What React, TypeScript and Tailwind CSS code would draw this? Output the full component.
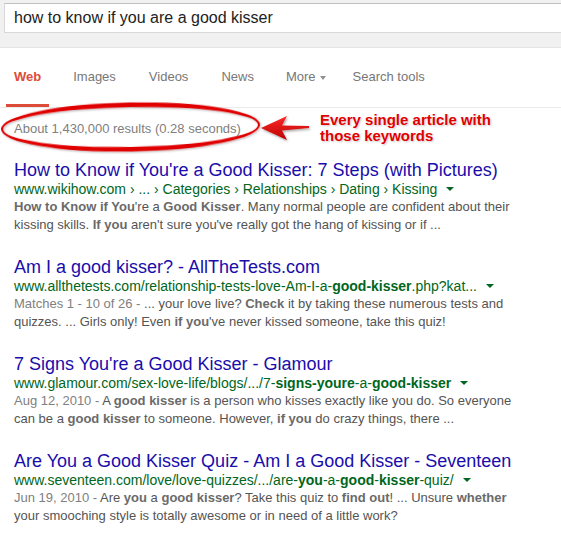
import React from "react";

type P = { children: React.ReactNode };
const B = ({ children }: P) => <b className="font-bold text-[#6a6a6a]">{children}</b>;
const G = ({ children }: P) => <b className="font-bold">{children}</b>;
const D = ({ children }: P) => <span className="text-[#808080]">{children}</span>;

function GreenCaret() {
  return (
    <span className="inline-block align-middle ml-[9px] mb-[2px] w-0 h-0 border-l-[4px] border-r-[4px] border-t-[4px] border-l-transparent border-r-transparent border-t-[#006621]" />
  );
}

function Result({
  title,
  url,
  lines,
  first,
}: {
  title: string;
  url: React.ReactNode;
  lines: React.ReactNode[];
  first?: boolean;
}) {
  return (
    <div className={first ? "mt-[22px]" : "mt-[23px]"}>
      <div className="text-[18px] leading-[20px] text-[#1a0dab] whitespace-nowrap">{title}</div>
      <div className="text-[14px] leading-[18px] text-[#006621] whitespace-nowrap">
        {url}
        <GreenCaret />
      </div>
      <div className="text-[13px] leading-[18px] text-[#545454]">
        {lines.map((l, i) => (
          <div key={i} className="whitespace-nowrap">
            {l}
          </div>
        ))}
      </div>
    </div>
  );
}

export default function App() {
  return (
    <div className="relative w-[561px] h-[540px] overflow-hidden bg-white font-['Liberation_Sans',Arial,sans-serif]">
      {/* Search band */}
      <div className="h-[48px] bg-[#f1f1f1] border-b border-[#e5e5e5] overflow-hidden pt-[3px] pl-[4px]">
        <div className="w-[620px] h-[30px] bg-white border border-[#d9d9d9] border-t-[#c0c0c0] pl-[9px] flex items-center">
          <span className="text-[16px] text-[#222] whitespace-nowrap">how to know if you are a good kisser</span>
        </div>
      </div>

      {/* Tabs */}
      <div className="border-b border-[#ebebeb] pl-[6px] flex items-end text-[13px] leading-[16px] text-[#777]">
        <div className="px-[8px] pt-[21px] pb-[19px] border-b-[3px] border-[#dd4b39] text-[#dd4b39] font-bold">Web</div>
        <div className="ml-[24px] pt-[21px] pb-[22px]">Images</div>
        <div className="ml-[33px] pt-[21px] pb-[22px]">Videos</div>
        <div className="ml-[33px] pt-[21px] pb-[22px]">News</div>
        <div className="ml-[32px] pt-[21px] pb-[22px] flex items-center">
          More
          <span className="ml-[4px] mt-[1px] w-0 h-0 border-l-[3.5px] border-r-[3.5px] border-t-[4px] border-l-transparent border-r-transparent border-t-[#909090]" />
        </div>
        <div className="ml-[27px] pt-[21px] pb-[22px]">Search tools</div>
      </div>

      {/* Results */}
      <div className="pl-[14px]">
        <div className="mt-[12px] text-[13px] leading-[18px] text-[#808080] whitespace-nowrap">
          About 1,430,000 results (0.28 seconds)
        </div>

        <Result
          first
          title="How to Know if You're a Good Kisser: 7 Steps (with Pictures)"
          url={<>www.wikihow.com › ... › Categories › Relationships › Dating › Kissing</>}
          lines={[
            <>
              <B>How to Know if You</B>'re a <B>Good Kisser</B>. Many normal people are confident about their
            </>,
            <>
              kissing skills. <B>If you</B> aren't sure you've really got the hang of kissing or if ...
            </>,
          ]}
        />

        <Result
          title="Am I a good kisser? - AllTheTests.com"
          url={
            <>
              www.allthetests.com/relationship-tests-love-Am-I-a-<G>good-kisser</G>.php?kat...
            </>
          }
          lines={[
            <>
              <D>Matches 1 - 10 of 26 - </D>... your love live? <B>Check</B> it by taking these numerous tests and
            </>,
            <>
              quizzes. ... Girls only! Even <B>if you</B>'ve never kissed someone, take this quiz!
            </>,
          ]}
        />

        <Result
          title="7 Signs You're a Good Kisser - Glamour"
          url={
            <>
              www.glamour.com/sex-love-life/blogs/.../7-<G>signs-youre</G>-a-<G>good-kisser</G>
            </>
          }
          lines={[
            <>
              <D>Aug 12, 2010 - </D>A <B>good kisser</B> is a person who kisses exactly like you do. So everyone
            </>,
            <>
              can be a <B>good kisser</B> to someone. However, <B>if you</B> do crazy things, there ...
            </>,
          ]}
        />

        <Result
          title="Are You a Good Kisser Quiz - Am I a Good Kisser - Seventeen"
          url={
            <>
              www.seventeen.com/love/love-quizzes/.../are-<G>you</G>-a-<G>good</G>-<G>kisser</G>-quiz/
            </>
          }
          lines={[
            <>
              <D>Jun 19, 2010 - </D>Are <B>you</B> a <B>good kisser</B>? Take this quiz to <B>find out</B>! ... Unsure{" "}
              <B>whether</B>
            </>,
            <>your smooching style is totally awesome or in need of a little work?</>,
          ]}
        />
      </div>

      {/* Annotation: ellipse */}
      <svg
        className="absolute left-0 top-[100px] pointer-events-none"
        width="270"
        height="56"
        viewBox="0 0 270 56"
      >
        <defs>
          <filter id="sh" x="-10%" y="-30%" width="120%" height="160%">
            <feDropShadow dx="1" dy="1" stdDeviation="0.8" floodColor="#000" floodOpacity="0.3" />
          </filter>
        </defs>
        <path
          filter="url(#sh)"
          fillRule="evenodd"
          fill="#e00000"
          d="M1,27 a129.5,24.5 0 1,0 259,0 a129.5,24.5 0 1,0 -259,0 Z M3,27 a127.5,20 0 1,0 255,0 a127.5,20 0 1,0 -255,0 Z"
          transform="rotate(-1 130 27)"
        />
      </svg>

      {/* Annotation: arrow */}
      <svg
        className="absolute left-[255px] top-[110px] pointer-events-none"
        width="62"
        height="36"
        viewBox="255 110 62 36"
      >
        <defs>
          <linearGradient id="ag" x1="0" y1="0" x2="0" y2="1">
            <stop offset="0" stopColor="#ff2a2a" />
            <stop offset="1" stopColor="#b80000" />
          </linearGradient>
          <filter id="ash" x="-20%" y="-30%" width="150%" height="170%">
            <feDropShadow dx="1" dy="1.5" stdDeviation="1" floodColor="#000" floodOpacity="0.35" />
          </filter>
        </defs>
        <path
          filter="url(#ash)"
          fill="url(#ag)"
          d="M261,128 L287,116 L282,125.5 L309,126 L309,128 L282,130.5 L287,140 Z"
        />
      </svg>

      {/* Annotation: text */}
      <div className="absolute left-[320px] top-[112px] text-[15px] leading-[16px] font-bold text-[#e00000] whitespace-nowrap [text-shadow:0_0_2px_#fff,1px_1px_2px_rgba(0,0,0,0.25)]">
        Every single article with
        <br />
        those keywords
      </div>
    </div>
  );
}
